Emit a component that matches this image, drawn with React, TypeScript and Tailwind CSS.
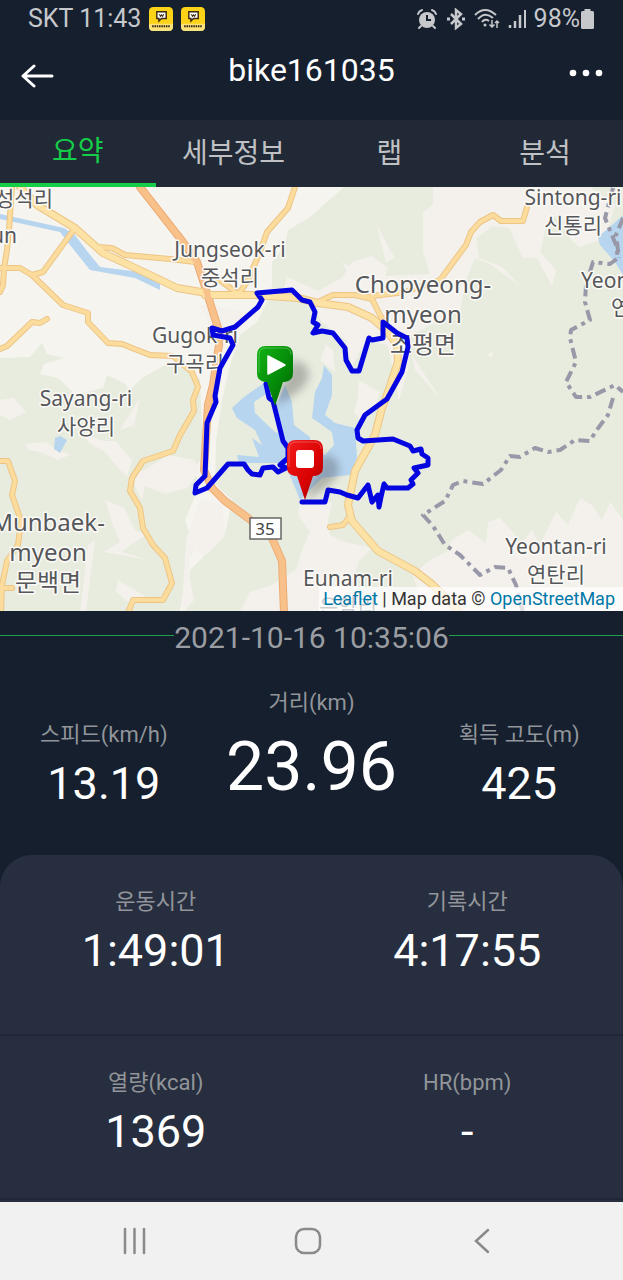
import React, { useState } from 'react';
import clsx from 'clsx';

interface MapLabel {
  x: number;
  y: number;
  size: number;
  lines: string[];
  anchor?: 'start' | 'middle' | 'end';
}

interface StatProps {
  label: string;
  value: string;
  large?: boolean;
}

const TABS = ['요약', '세부정보', '랩', '분석'];

const MAIN_ROADS = [
  'M20 187 L37 205 75 228 103 253 133 267 150 275 177 288 207 293 M205 295 H255 L298 298 318 303 348 307 372 318 388 332 397 345 398 362 388 392 382 408 375 435 355 471 348 505 352 521 378 551 415 571 433 585 456 608 460 613',
];

const MINOR_ROADS = [
  'M12 187 L9 230 7 250 4 268 3 285 0 292',
  'M97 247 L112 248 125 255 170 259 195 262',
  'M75 228 L43 272 32 275',
  'M0 268 H20 L32 275 63 305 88 313 V322 L108 343 122 344 150 355 173 356 192 372 198 387 193 400 194 411 180 435 173 451 143 461 132 478 130 491 140 508 143 528 153 545 165 558 172 583 163 600 H133 L128 613',
  'M0 349 L7 346 32 322 40 323 47 319',
  'M0 461 H8 L15 481 12 495 21 521 18 545 7 561 2 585 1 613 M0 588 H12',
  'M295 187 L288 208 267 232 260 252 247 282 240 292',
  'M217 278 L237 293',
  'M318 302 L333 295 H355 L372 299 380 315 388 328 M365 297 L405 292 440 280 466 245 471 232 480 222 493 215 501 221 H523 L527 207',
  'M330 527 L343 525 350 516',
];

const MOTORWAY =
  'M140 187 L183 242 197 262 207 293 218 328 219 345 213 385 208 405 204 470 212 488 225 501 248 518 272 538 282 561 284 613';

const FOREST = [
  'M344 187 L310 217 288 230 285 245 272 262 V285 L268 300 257 322 240 335 230 365 222 400 216 440 215 484 232 500 226 530 208 545 205 555 190 570 185 613 H623 V187 Z',
  'M0 358 L30 357 42 343 47 354 64 358 44 364 40 374 58 378 76 395 103 388 107 375 124 383 130 390 142 378 165 365 190 368 200 380 203 455 194 470 200 485 185 520 190 535 200 540 188 560 180 613 H0 Z',
];

const FIELDS = [
  'M433 187 V205 L423 212 V252 L430 274 385 276 388 268 372 256 352 262 342 278 318 291 287 277 283 292 312 300 322 322 346 340 352 366 366 340 388 345 399 400 408 370 412 335 460 310 466 280 475 258 490 264 519 285 502 267 479 258 476 238 493 226 509 228 523 258 H537 L552 286 556 270 540 252 547 222 560 213 571 240 580 247 605 238 615 205 590 187 Z',
  'M376 222 L387 245 395 258 386 262 Z M342 262 L352 268 350 276 Z M412 355 L440 398 415 370 Z M487 355 L493 351 492 358 Z',
  'M358 380 L380 392 376 405 362 422 354 412 358 398 Z',
  'M77 431 L103 441 116 441 132 461 127 476 145 470 168 455 194 460 200 470 188 488 165 494 145 486 142 500 132 480 120 470 105 452 92 445 Z',
  'M25 444 L46 442 54 448 70 455 58 460 40 452 28 450 Z M105 500 L124 508 135 530 146 535 130 545 122 552 148 560 104 552 120 542 113 525 Z M118 580 L148 598 130 604 116 592 Z M88 545 L95 540 86 613 H80 Z M0 400 L14 398 26 412 10 420 0 415 Z M120 430 L140 398 134 425 Z',
  'M200 500 L222 502 225 535 212 550 204 556 192 550 188 570 194 600 185 611 H182 L186 540 Z',
  'M300 500 L332 502 328 520 330 535 345 542 372 548 360 560 352 580 340 611 H240 L250 592 272 585 296 570 302 550 310 532 298 515 Z',
  'M413 575 L430 560 447 552 452 540 468 530 486 543 488 522 500 518 515 535 520 545 532 530 540 545 556 512 568 525 580 498 592 505 602 520 610 502 623 520 V613 H425 Z',
  'M320 360 L326 345 333 350 335 372 Z M200 305 L240 310 248 322 222 350 Z',
];

const LAKES = [
  'M0 214 L64 228 75 235 87 251 100 267 140 272 160 284 V290 L135 278 90 270 70 245 60 232 0 219 Z',
  'M264 383 L244 397 232 408 237 418 255 430 262 445 252 438 259 457 237 455 239 463 H284 L294 485 300 500 322 478 350 475 357 458 355 428 335 423 325 415 332 395 V375 L324 365 322 378 315 392 312 418 332 432 334 445 325 455 310 445 V437 L294 425 292 402 285 385 275 408 282 435 275 432 255 413 254 402 269 392 Z',
  'M598 237 L612 225 623 215 V275 L615 262 600 245 Z',
  'M55 438 L60 436 67 440 60 453 54 449 Z M0 588 L6 590 0 596 Z',
];

const BORDER =
  'M613 188 L605 218 616 245 618 258 610 264 593 262 586 285 585 302 590 320 571 330 570 338 576 362 566 382 576 397 H590 L615 385 623 392 M623 218 L616 235 619 258 M613 398 L608 415 596 431 590 441 575 440 560 450 548 452 535 448 520 457 510 456 501 470 483 484 463 481 453 485 445 501 423 515 433 526 445 545 460 555 480 575 495 567 508 568 516 585 523 613';

const TRACK =
  'M266 384 L269 398 273 401 283 441 288 448 V458 L280 465 286 468 278 472 273 467 263 468 260 475 252 474 248 470 244 464 H228 L207 488 195 493 196 485 205 476 207 423 216 402 215 396 220 368 233 345 230 338 213 335 212 328 222 331 235 327 258 307 262 300 257 293 292 290 302 300 310 302 315 312 313 322 318 325 313 333 322 331 333 333 345 348 346 360 352 371 H359 L369 338 372 340 383 338 V322 L397 333 407 338 408 347 402 372 387 399 365 415 357 430 358 438 363 441 393 439 410 446 413 451 421 449 422 454 428 458 V465 L414 468 418 473 411 480 413 484 408 488 H387 L384 484 381 497 379 507 378 495 372 502 368 485 358 498 347 495 340 492 328 490 325 502 H302';

const LABELS: MapLabel[] = [
  { x: 24, y: 206, size: 21, lines: ['성석리'] },
  { x: 17, y: 243, size: 21, lines: ['un'], anchor: 'end' },
  { x: 230, y: 257, size: 21, lines: ['Jungseok-ri', '중석리'] },
  { x: 195, y: 343, size: 21, lines: ['Gugok-ri', '구곡리'] },
  { x: 86, y: 406, size: 21, lines: ['Sayang-ri', '사양리'] },
  { x: 48, y: 531, size: 24, lines: ['Munbaek-', 'myeon', '문백면'] },
  { x: 423, y: 293, size: 24, lines: ['Chopyeong-', 'myeon', '조평면'] },
  { x: 573, y: 205, size: 21, lines: ['Sintong-ri', '신통리'] },
  { x: 581, y: 288, size: 21, lines: ['Yeon'], anchor: 'start' },
  { x: 611, y: 315, size: 21, lines: ['연'], anchor: 'start' },
  { x: 556, y: 554, size: 21, lines: ['Yeontan-ri', '연탄리'] },
  { x: 348, y: 586, size: 21, lines: ['Eunam-ri', '은암리'] },
];

const Marker = ({ x, y, fill, children }: { x: number; y: number; fill: string; children: React.ReactNode }) => (
  <g transform={`translate(${x} ${y})`}>
    <path d="M0 0 L6 -20 L18 -46 Q32 -44 34 -32 Q34 -20 14 -8 Z" fill="#333" opacity="0.3" filter="url(#shadow)" />
    <path
      d="M0 0 L-8 -24 H-10 Q-18 -25 -18 -33 V-51 Q-18 -60 -9 -60 H9 Q18 -60 18 -51 V-33 Q18 -25 10 -24 H8 Z"
      fill={fill}
    />
    <path d="M-16 -33 V-51 Q-16 -58 -9 -58 H9 Q16 -58 16 -51" fill="none" stroke="#fff" strokeOpacity="0.25" />
    {children}
  </g>
);

const RouteMap = () => (
  <div className="relative overflow-hidden">
    <svg viewBox="0 187 623 424" className="block w-full" role="img" aria-label="Route map">
      <defs>
        <linearGradient id="startFill" x1="0" y1="0" x2="1" y2="1">
          <stop offset="0" stopColor="#12b414" />
          <stop offset="0.6" stopColor="#048708" />
          <stop offset="1" stopColor="#036005" />
        </linearGradient>
        <linearGradient id="endFill" x1="0" y1="0" x2="1" y2="1">
          <stop offset="0" stopColor="#f21d1d" />
          <stop offset="0.6" stopColor="#d90202" />
          <stop offset="1" stopColor="#8f0303" />
        </linearGradient>
        <filter id="shadow" x="-50%" y="-50%" width="200%" height="200%">
          <feGaussianBlur stdDeviation="4" />
        </filter>
      </defs>

      <rect y="187" width="623" height="424" fill="#f6f4ef" />
      {FOREST.map((d) => <path key={d} d={d} fill="#e8ecdf" />)}
      {FIELDS.map((d) => <path key={d} d={d} fill="#f4f1ec" />)}
      {LAKES.map((d) => <path key={d} d={d} fill="#b7d5ef" />)}

      {/* roads are drawn as a dark casing with a lighter fill on top */}
      <g fill="none" strokeLinejoin="round" strokeLinecap="round">
        <path d={MOTORWAY} stroke="#ecab74" strokeWidth="8" />
        {MINOR_ROADS.map((d) => <path key={d} d={d} stroke="#ecc586" strokeWidth="6" />)}
        {MAIN_ROADS.map((d) => <path key={d} d={d} stroke="#ecc586" strokeWidth="8" />)}
        {MINOR_ROADS.map((d) => <path key={d} d={d} stroke="#fcdc9c" strokeWidth="4" />)}
        {MAIN_ROADS.map((d) => <path key={d} d={d} stroke="#fce2a4" strokeWidth="6" />)}
        <path d={MOTORWAY} stroke="#f9c18a" strokeWidth="6" />
        <path d={BORDER} stroke="#9898a8" strokeWidth="4" strokeDasharray="11 5 4 5" strokeLinecap="butt" />
      </g>

      <g
        fill="#55575a"
        stroke="#fbfaf7"
        strokeWidth="3"
        strokeLinejoin="round"
        paintOrder="stroke"
        className="font-['Noto_Sans','Noto_Sans_CJK_KR',sans-serif]"
      >
        {LABELS.map(({ x, y, size, lines, anchor = 'middle' }) =>
          lines.map((line, i) => (
            <text key={line} x={x} y={y + i * (size > 21 ? 30 : 28)} fontSize={size} textAnchor={anchor}>
              {line}
            </text>
          ))
        )}
      </g>

      <rect x="250" y="518" width="31" height="21" fill="#fff" stroke="#666" strokeWidth="1.5" />
      <text
        x="265"
        y="535"
        fontSize="17"
        textAnchor="middle"
        fill="#444"
        className="font-['Noto_Sans',sans-serif]"
      >
        35
      </text>

      <path d={TRACK} fill="none" stroke="#0505e0" strokeWidth="5" strokeLinejoin="round" strokeLinecap="round" />
      <Marker x={275} y={406} fill="url(#startFill)">
        <path d="M-7 -50 L10 -41 -7 -32 Z" fill="#fff" stroke="#fff" strokeWidth="1.5" strokeLinejoin="round" />
      </Marker>
      <Marker x={305} y={500} fill="url(#endFill)">
        <rect x="-9" y="-50" width="18" height="18" rx="3" fill="#fff" />
      </Marker>
    </svg>

    <div className="absolute right-0 bottom-0 bg-white/70 pr-2 pl-1 text-[18px] leading-6 text-[#333]">
      <a href="#leaflet" className="text-[#0078a8]">Leaflet</a> | Map data ©{' '}
      <a href="#osm" className="text-[#0078a8]">OpenStreetMap</a>
    </div>
  </div>
);

const NoteBadge = () => (
  <svg viewBox="0 0 23 23" className="h-6 w-6">
    <rect width="23" height="23" rx="4" fill="#fcd316" />
    <path d="M0 16 H23 V19 Q23 23 19 23 H4 Q0 23 0 19 Z" fill="#fbe27a" />
    <path d="M7.500 4.500 H16.500 V11 H12 L9.500 13.500 V11 H7.500 Z" fill="#fff" stroke="#3a2a12" strokeWidth="1.400" />
    <path d="M10 7 L11 9 12 7.500 13 9 14 7" fill="none" stroke="#3a2a12" />
    <path d="M3 18.500 H20" stroke="#3a2a12" strokeWidth="1.800" strokeDasharray="1.500 0.700" />
  </svg>
);

const StatusIcons = () => (
  <div className="flex items-center gap-2 text-[#c6c8cb]">
    <svg viewBox="0 0 22 22" className="h-[22px] w-[22px]" fill="none" stroke="currentColor" strokeWidth="2">
      <circle cx="11" cy="12" r="8" fill="currentColor" stroke="none" />
      <path d="M2 6 Q3 3 6 2 M20 6 Q19 3 16 2 M5 18 L3 20 M17 18 L19 20" strokeLinecap="round" />
      <path d="M11 7 V12 H15" stroke="#151f2e" />
    </svg>
    <svg viewBox="0 0 20 22" className="h-[22px] w-5" fill="none" stroke="currentColor" strokeWidth="2.500">
      <path d="M5 6 L15 16 10 20 V2 L15 6 5 16" />
      <path d="M1 11 H4 M16 11 H19" strokeWidth="3" />
    </svg>
    <svg viewBox="0 0 26 22" className="h-[22px] w-[26px]" fill="none" stroke="currentColor" strokeWidth="2">
      <path d="M1 7 Q11 -3 22 7 M4 11 Q11 3 19 10 M8 14 Q11 10 15 13" />
      <circle cx="11" cy="17" r="1.500" fill="currentColor" stroke="none" />
      <path d="M18 12 V19 M15.500 16.500 L18 19 20.500 16.500 M23 20 V13 M21 15 L23 13 25 15" strokeWidth="1.500" />
    </svg>
    <svg viewBox="0 0 18 22" className="h-[22px] w-[18px]" stroke="currentColor" strokeWidth="2.500">
      <path d="M2 20 V17 M7 20 V13 M12 20 V7" />
      <path d="M17 20 V2" strokeWidth="2" />
    </svg>
    <div className="flex items-center">
      <span>98%</span>
      <svg viewBox="0 0 14 22" className="h-[22px] w-[15px]" fill="currentColor">
        <path d="M4 1 H10 V3 H12 Q13.500 3 13.500 4.500 V19.500 Q13.500 21 12 21 H2 Q0.500 21 0.500 19.500 V4.500 Q0.500 3 2 3 H4 Z" />
      </svg>
    </div>
  </div>
);

const Stat: React.FC<StatProps> = ({ label, value, large = false }) => (
  <div className="flex flex-col items-center">
    <dt className="text-[22px] leading-8 text-[#929599]">{label}</dt>
    <dd className={clsx('text-white', large ? 'text-[68px] leading-[96px]' : 'text-[45px] leading-[66px]')}>{value}</dd>
  </div>
);

export default function App() {
  const [activeTab, setActiveTab] = useState(TABS[0]);

  return (
    <div className="flex min-h-screen flex-col bg-[#151f2e] font-[Roboto,'Noto_Sans_CJK_KR',sans-serif]">
      <div className="flex h-[38px] items-center justify-between px-7 text-[25px] leading-8 text-[#c6c8cb]">
        <div className="flex items-center gap-2">
          <span>SKT 11:43</span>
          <NoteBadge />
          <NoteBadge />
        </div>
        <StatusIcons />
      </div>

      <header className="flex h-[82px] items-start justify-between px-5 pt-2">
        <button aria-label="Back" className="flex h-[60px] w-12 items-center text-white">
          <svg viewBox="0 0 34 24" className="h-6 w-[34px]" fill="none" stroke="currentColor" strokeWidth="3">
            <path d="M32 12 H3 M14 2 L3 12 14 22" strokeLinecap="round" strokeLinejoin="round" />
          </svg>
        </button>
        <h1 className="pt-1 text-[32px] leading-10 text-white">bike161035</h1>
        <button aria-label="More" className="flex h-[54px] w-12 items-center justify-end text-white">
          <svg viewBox="0 0 34 8" className="h-2 w-[34px]" fill="currentColor">
            <circle cx="4" cy="4" r="3.300" />
            <circle cx="17" cy="4" r="3.300" />
            <circle cx="30" cy="4" r="3.300" />
          </svg>
        </button>
      </header>

      <nav className="grid h-[67px] grid-cols-4 bg-[#212836]">
        {TABS.map((tab) => (
          <button
            key={tab}
            onClick={() => setActiveTab(tab)}
            className={clsx(
              'text-[28px] leading-10',
              tab === activeTab ? 'border-b-4 border-[#15cd48] text-[#15cd48]' : 'text-[#bfc1c4]'
            )}
          >
            {tab}
          </button>
        ))}
      </nav>

      <RouteMap />

      <section>
        <div className="flex items-start pt-1">
          <div className="mt-5 h-px flex-1 bg-[#1f9f4d]" />
          <time className="text-[30px] leading-[46px] text-[#9a9da1]">2021-10-16 10:35:06</time>
          <div className="mt-5 h-px flex-1 bg-[#1f9f4d]" />
        </div>
        <dl className="grid grid-cols-3 items-start pt-[26px] pb-[38px]">
          <div className="pt-8"><Stat label="스피드(km/h)" value="13.19" /></div>
          <Stat label="거리(km)" value="23.96" large />
          <div className="pt-8"><Stat label="획득 고도(m)" value="425" /></div>
        </dl>
      </section>

      <section className="flex-1 rounded-t-[32px] bg-[#272e3f]">
        <dl className="grid grid-cols-2 border-b-2 border-[#1f2737] pt-[31px] pb-[50px]">
          <Stat label="운동시간" value="1:49:01" />
          <Stat label="기록시간" value="4:17:55" />
        </dl>
        <dl className="grid grid-cols-2 border-b-2 border-[#1f2737] pt-[31px] pb-[33px]">
          <Stat label="열량(kcal)" value="1369" />
          <Stat label="HR(bpm)" value="-" />
        </dl>
      </section>

      <nav className="flex h-[78px] items-center justify-around bg-[#f1f1f1] pr-[54px] pl-12 text-[#8a8a8a]">
        <button aria-label="Recents" className="p-2">
          <svg viewBox="0 0 28 28" className="h-7 w-7" stroke="currentColor" strokeWidth="2.500">
            <path d="M4 2 V26 M13.500 2 V26 M23 2 V26" strokeLinecap="round" />
          </svg>
        </button>
        <button aria-label="Home" className="p-2">
          <svg viewBox="0 0 28 28" className="h-7 w-7" fill="none" stroke="currentColor" strokeWidth="2.500">
            <rect x="2" y="2" width="24" height="24" rx="8" />
          </svg>
        </button>
        <button aria-label="Navigate back" className="p-2">
          <svg viewBox="0 0 28 28" className="h-7 w-7" fill="none" stroke="currentColor" strokeWidth="2.500">
            <path d="M20 3 L8 14 20 25" strokeLinecap="round" />
          </svg>
        </button>
      </nav>
    </div>
  );
}
